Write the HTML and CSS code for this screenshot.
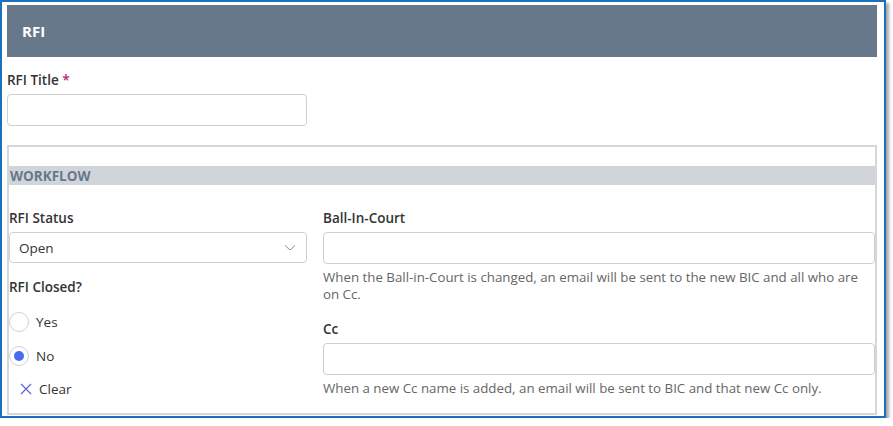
FILE: index.html
```html
<!DOCTYPE html>
<html lang="en">
<head>
  <meta charset="UTF-8" />
  <meta name="viewport" content="width=device-width, initial-scale=1.0"/>
  <title>RFI</title>
  <link rel="stylesheet" href="styles.css">
</head>
<body>
  <div class="frame">
    <!-- Page header -->
    <div class="page-header">RFI</div>

    <div class="field title-field">
      <label class="field-label">RFI Title <span class="required">*</span></label>
      <div class="text-input title-input"></div>
    </div>

    <!-- Workflow panel -->
    <div class="panel">
      <div class="panel-band">WORKFLOW</div>
      <div class="panel-grid">
        <div class="col">
          <label class="field-label">RFI Status</label>
          <div class="text-input select-input">
            <span>Open</span>
            <svg class="chevron" width="12" height="8" viewBox="0 0 12 8">
              <path d="M1 1.5 L6 6 L11 1.5" fill="none" stroke="#8a8f96" stroke-width="1"/>
            </svg>
          </div>

          <label class="field-label closed-label">RFI Closed?</label>
          <div class="radio-row">
            <span class="radio"></span>
            <span>Yes</span>
          </div>
          <div class="radio-row">
            <span class="radio checked"></span>
            <span>No</span>
          </div>
          <div class="clear-row">
            <svg width="12" height="12" viewBox="0 0 12 12">
              <path d="M1 1 L11 11 M11 1 L1 11" stroke="#5b5fd6" stroke-width="1.1"/>
            </svg>
            <span>Clear</span>
          </div>
        </div>

        <div class="col">
          <label class="field-label">Ball-In-Court</label>
          <div class="text-input"></div>
          <p class="hint">When the Ball-in-Court is changed, an email will be sent to the new BIC and all who are on Cc.</p>

          <label class="field-label cc-label">Cc</label>
          <div class="text-input"></div>
          <p class="hint">When a new Cc name is added, an email will be sent to BIC and that new Cc only.</p>
        </div>
      </div>
    </div>
  </div>
</body>
</html>
```

FILE: styles.css
```css
body {
  margin: 0;
  font-family: "Open Sans", "Noto Sans", sans-serif;
  color: #333;
  background: #fff;
}

.frame {
  width: 870px;
  height: 411px;
  border: 2px solid #1a70bb;
  padding: 3px 7px 0 5px;
  box-shadow: 3px 3px 3px rgba(0, 0, 0, 0.35);
  overflow: hidden;
}

.page-header {
  height: 52px;
  background: #66788a;
  color: #fff;
  font-weight: 700;
  font-size: 15px;
  line-height: 52px;
  padding-left: 15px;
}

.field-label {
  display: block;
  font-size: 13.5px;
  font-weight: 600;
  line-height: 20px;
  color: #333;
}

.required {
  color: #c0266b;
}

.title-field {
  margin-top: 13px;
}

.text-input {
  box-sizing: border-box;
  height: 32px;
  border: 1px solid #cdcfd2;
  border-radius: 4px;
  margin-top: 4px;
  background: #fff;
}

.title-input {
  width: 300px;
}

/* Workflow panel */
.panel {
  margin-top: 19px;
  border: 2px solid #d3d6da;
  height: 266px;
}

.panel-band {
  margin-top: 19px;
  height: 19px;
  line-height: 20px;
  background: #d1d5da;
  color: #66788a;
  font-size: 13.5px;
  font-weight: 700;
  padding-left: 1px;
}

.panel-grid {
  display: grid;
  grid-template-columns: 298px 1fr;
  column-gap: 16px;
  margin-top: 23px;
}

.col {
  display: flex;
  flex-direction: column;
}

.select-input {
  display: flex;
  align-items: center;
  justify-content: space-between;
  padding: 0 10px 0 9px;
  font-size: 13.5px;
  height: 31px;
}

.chevron {
  display: block;
}

.closed-label {
  margin-top: 14px;
}

.radio-row {
  display: flex;
  align-items: center;
  gap: 7px;
  height: 20px;
  margin-top: 15px;
  font-size: 13.5px;
}

.radio-row + .radio-row {
  margin-top: 14px;
}

.radio {
  box-sizing: border-box;
  width: 20px;
  height: 20px;
  border: 1px solid #cfd1d4;
  border-radius: 50%;
  display: flex;
  align-items: center;
  justify-content: center;
}

.radio.checked::after {
  content: "";
  width: 10px;
  height: 10px;
  border-radius: 50%;
  background: #4a6cf0;
}

.clear-row {
  display: flex;
  align-items: center;
  gap: 7px;
  margin-top: 14px;
  padding-left: 11px;
  font-size: 13.5px;
}

.clear-row svg {
  display: block;
}

.hint {
  margin: 5px 0 0;
  font-size: 13.3px;
  line-height: 17px;
  color: #666;
}

.cc-label {
  margin-top: 16px;
}
```
